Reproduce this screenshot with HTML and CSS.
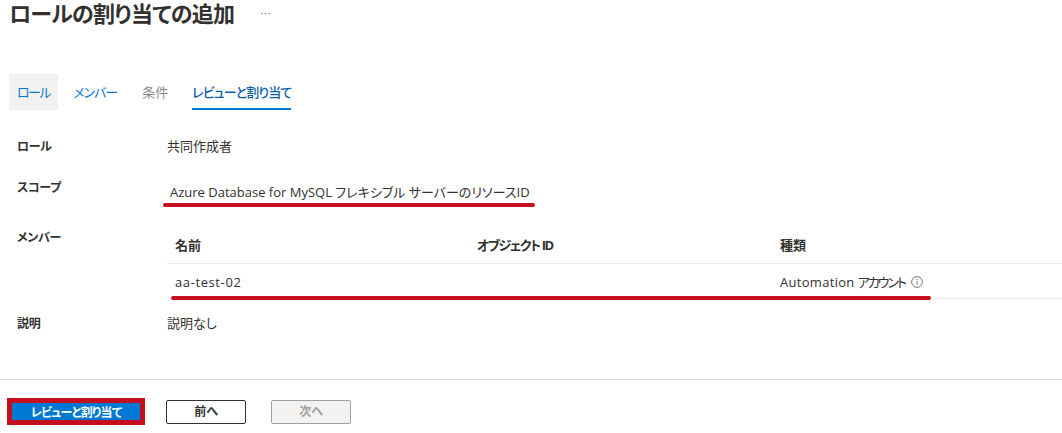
FILE: index.html
```html
<!DOCTYPE html>
<html lang="ja">
<head>
    <meta charset="UTF-8">
    <meta name="viewport" content="width=device-width, initial-scale=1.0">
    <title>ロールの割り当ての追加</title>
    <link rel="stylesheet" href="styles.css">
</head>
<body>

    <header class="page-header">
        <h1>ロールの割り当ての追加</h1>
        <span class="more">···</span>
    </header>

    <nav class="tabs">
        <a class="tab tab-hover">ロール</a>
        <a class="tab tab-member">メンバー</a>
        <a class="tab tab-muted">条件</a>
        <a class="tab tab-active">レビューと割り当て</a>
    </nav>

    <section class="details">
        <div class="row row-role">
            <div class="label">ロール</div>
            <div class="value">共同作成者</div>
        </div>
        <div class="row row-scope">
            <div class="label">スコープ</div>
            <div class="value scope-value">
                Azure Database for MySQL フレキシブル サーバーのリソースID
                <span class="mark mark-scope"></span>
            </div>
        </div>
        <div class="row row-members">
            <div class="label">メンバー</div>
            <div class="members">
                <div class="table-row table-head">
                    <div>名前</div>
                    <div class="tight">オブジェクト ID</div>
                    <div>種類</div>
                </div>
                <div class="table-row table-body">
                    <div class="name-cell">aa-test-02</div>
                    <div></div>
                    <div class="type-cell">
                        <span class="latin">Automation</span>
                        <span class="kana">アカウント</span>
                        <svg class="info" width="12" height="12" viewBox="0 0 12 12">
                            <circle cx="6" cy="6" r="5.4" fill="none" stroke="#797775" stroke-width="1"/>
                            <rect x="5.5" y="5" width="1" height="3.6" fill="#797775"/>
                            <rect x="5.5" y="3" width="1" height="1.1" fill="#797775"/>
                        </svg>
                    </div>
                    <span class="mark mark-member"></span>
                </div>
            </div>
        </div>
        <div class="row row-desc">
            <div class="label">説明</div>
            <div class="value">説明なし</div>
        </div>
    </section>

    <footer class="actions">
        <button class="btn btn-primary">レビューと割り当て</button>
        <button class="btn btn-back">前へ</button>
        <button class="btn btn-next" disabled>次へ</button>
    </footer>

</body>
</html>
```

FILE: styles.css
```css
* {
    box-sizing: border-box;
}

body {
    margin: 0;
    height: 433px;
    overflow: hidden;
    background-color: #fff;
    color: #323130;
    font-family: "Open Sans", "Noto Sans CJK JP", sans-serif;
    font-size: 13px;
    font-feature-settings: "palt";
}

.page-header {
    display: flex;
    align-items: flex-start;
    height: 74px;
    padding-left: 9px;
}

.page-header h1 {
    margin: 0;
    font-size: 22px;
    line-height: 26px;
    font-weight: 700;
    letter-spacing: -0.7px;
    color: #323130;
}

.more {
    margin-left: 26px;
    font-size: 10px;
    line-height: 26px;
    letter-spacing: 1px;
    color: #605e5c;
}

.tabs {
    display: flex;
    height: 36px;
    padding-left: 9px;
}

.tab {
    display: block;
    padding: 0 8px;
    margin-right: 7px;
    line-height: 36px;
    letter-spacing: -1px;
    color: #0078d4;
}

.tab-hover {
    background-color: #f3f2f1;
    letter-spacing: -1.5px;
}

.tab-member {
    margin-right: 9px;
}

.tab-muted {
    letter-spacing: 0;
    color: #8a8886;
}

.tab-active {
    padding: 0;
    margin-left: 9px;
    font-weight: 500;
    letter-spacing: -0.9px;
    color: #0a5fa8;
    border-bottom: 2px solid #0078d4;
}

.details {
    padding: 27px 0 0 17px;
}

.row {
    display: grid;
    grid-template-columns: 150px 1fr;
    line-height: 18px;
}

.label {
    font-weight: 700;
    font-size: 12px;
    letter-spacing: -0.3px;
}

.row-role .label,
.row-desc .label {
    padding-top: 1px;
}

.row-scope {
    margin-top: 23px;
}

.scope-value {
    position: relative;
    padding: 4px 0 0 3px;
}

.mark {
    position: absolute;
    height: 4px;
    border-radius: 2px;
    background-color: #c50f1f;
}

.mark-scope {
    left: -4px;
    top: 24px;
    width: 372px;
}

.row-members {
    margin-top: 28px;
}

.members {
    margin-top: -2px;
}

.table-row {
    position: relative;
    display: grid;
    grid-template-columns: 302px 303px 1fr;
    padding-left: 8px;
    align-items: center;
    border-bottom: 1px solid #edebe9;
}

.table-head {
    height: 37px;
    font-weight: 700;
}

.tight {
    letter-spacing: -1.4px;
}

.table-body {
    height: 35px;
    padding-top: 1px;
}

.name-cell {
    letter-spacing: 0.6px;
}

.type-cell {
    display: flex;
    align-items: center;
}

.latin {
    letter-spacing: 0.3px;
}

.kana {
    margin-left: 3px;
    letter-spacing: -2px;
}

.info {
    margin-left: 6px;
}

.mark-member {
    left: 4px;
    bottom: -2px;
    width: 760px;
    height: 4px;
}

.row-desc {
    margin-top: 15px;
}

.actions {
    display: flex;
    align-items: center;
    height: 64px;
    margin-top: 46px;
    padding-left: 7px;
    border-top: 1px solid #e1dfdd;
}

.btn {
    height: 24px;
    border-radius: 2px;
    font: inherit;
    font-size: 12px;
    font-weight: 700;
    line-height: 20px;
    padding: 0;
}

.btn-primary {
    width: 138px;
    height: 27px;
    border: 5px solid #c50f1f;
    border-radius: 0;
    background-color: #0078d4;
    color: #fff;
    letter-spacing: -0.8px;
}

.btn-back {
    width: 80px;
    margin-left: 21px;
    background-color: #fff;
    border: 1px solid #323130;
    color: #323130;
}

.btn-next {
    width: 80px;
    margin-left: 25px;
    background-color: #f3f2f1;
    border: 1px solid #a19f9d;
    color: #a19f9d;
}
```
